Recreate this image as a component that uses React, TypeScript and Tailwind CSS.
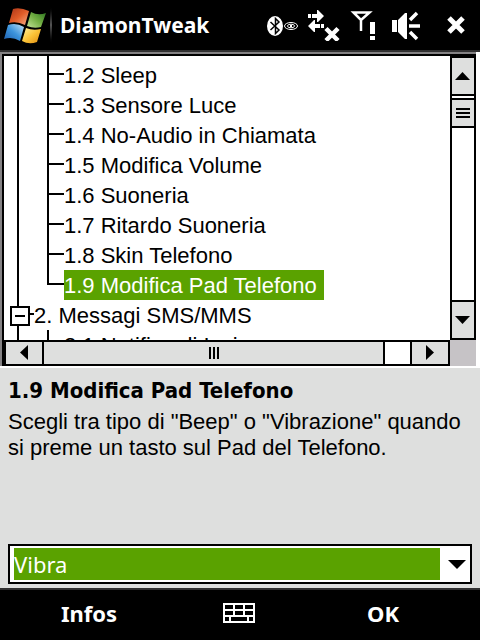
import React from 'react'
import { clsx } from 'clsx'

const items = [
  '1.2 Sleep',
  '1.3 Sensore Luce',
  '1.4 No-Audio in Chiamata',
  '1.5 Modifica Volume',
  '1.6 Suoneria',
  '1.7 Ritardo Suoneria',
  '1.8 Skin Telefono',
  '1.9 Modifica Pad Telefono',
]

function StartFlag() {
  return (
    <svg width="44" height="38" viewBox="0 -2 44 38" aria-hidden="true">
      <defs>
        <linearGradient id="red" x1="0" y1="0" x2="1" y2="1">
          <stop offset="0" stopColor="#a83418" />
          <stop offset="0.5" stopColor="#e05c28" />
          <stop offset="1" stopColor="#f8b088" />
        </linearGradient>
        <linearGradient id="green" x1="0" y1="1" x2="1" y2="0">
          <stop offset="0" stopColor="#c4e498" />
          <stop offset="0.5" stopColor="#74b044" />
          <stop offset="1" stopColor="#2c7420" />
        </linearGradient>
        <linearGradient id="blue" x1="0" y1="1" x2="1" y2="0">
          <stop offset="0" stopColor="#1c5cac" />
          <stop offset="0.5" stopColor="#3c94dc" />
          <stop offset="1" stopColor="#c4e4f8" />
        </linearGradient>
        <linearGradient id="yellow" x1="0" y1="0" x2="1" y2="1">
          <stop offset="0" stopColor="#fff0a0" />
          <stop offset="0.5" stopColor="#fcc438" />
          <stop offset="1" stopColor="#e08c10" />
        </linearGradient>
      </defs>
      <path d="M9 1Q16 -1 25 3L21 17Q13 13 5 15Z" fill="url(#red)" />
      <path d="M27 4Q34 8 42 5L37 19Q30 21 23 18Z" fill="url(#green)" />
      <path d="M4 17Q12 14 20 19L16 33Q8 28 0 31Z" fill="url(#blue)" />
      <path d="M22 20Q29 23 37 21L33 34Q25 37 18 33Z" fill="url(#yellow)" />
    </svg>
  )
}

function StatusIcons() {
  return (
    <svg width="156" height="32" viewBox="266 9 156 32" fill="#fff" aria-hidden="true">
      {/* bluetooth */}
      <ellipse cx="275" cy="26" rx="8" ry="10" />
      <path d="M270.500 22L279 30L275.500 33.500V18.500L279 22L270.500 30" fill="none" stroke="#000" strokeWidth="1.500" />
      <g fill="none" stroke="#fff" strokeWidth="1">
        <ellipse cx="291" cy="26" rx="6.500" ry="3.500" />
        <ellipse cx="291" cy="26" rx="3.500" ry="1.800" />
      </g>
      <path d="M290 25h2v2h-2z" />
      {/* data connection */}
      <path d="M308 14h3v4h-3zM312 14h5v-4h1l6 6l-6 6h-1v-4h-5z" />
      <path d="M308 26l6 -6h1v4h5v4h-5v4h-1zM321 24h3v4h-3z" />
      <path d="M326 28.500L338 40.500M338 28.500L326 40.500" fill="none" stroke="#fff" strokeWidth="4.500" />
      {/* signal */}
      <path d="M353.500 12.500H369.500L361 20ZM361 19V31" fill="none" stroke="#fff" strokeWidth="2.500" />
      <path d="M370 22h5v12h-5zM370 36h5v4h-5z" />
      {/* speaker */}
      <path d="M392 20h5v12h-5zM398 20l7 -7h2v26h-2l-7 -7z" />
      <path d="M410 20L417 13M409 26H420M410 32L417 39" fill="none" stroke="#fff" strokeWidth="3.500" />
    </svg>
  )
}

function TitleBar() {
  return (
    <header className="flex h-[50px] items-center bg-black text-white">
      <button aria-label="Start" className="ml-1 shrink-0">
        <StartFlag />
      </button>
      <span className="ml-[2px] h-10 w-[2px] bg-linear-to-b from-black via-[#555] to-black" />
      <h1 className="ml-2 flex-1 font-['Noto_Sans',sans-serif] text-[21px] leading-[30px] font-bold">DiamonTweak</h1>
      <StatusIcons />
      <button aria-label="Close" className="mr-[14px] ml-6 shrink-0">
        <svg width="20" height="20" viewBox="0 0 20 20">
          <path d="M3 3L17 17M17 3L3 17" stroke="#fff" strokeWidth="5" />
        </svg>
      </button>
    </header>
  )
}

function TreeItem({ label, selected = false, last = false }: { label: string; selected?: boolean; last?: boolean }) {
  return (
    <li className="flex h-[30px]">
      <span className={clsx('ml-[43px] w-[2px] bg-black', last ? 'h-[15px]' : 'h-[30px]')} />
      <span className="mt-[13px] h-[2px] w-[15px] bg-black" />
      <span className={clsx('leading-[32px] whitespace-nowrap', selected && 'min-w-[260px] bg-[#5aa200] text-white')}>
        {label}
      </span>
    </li>
  )
}

function Tree() {
  return (
    <div className="flex h-[284px] min-w-0 flex-1 overflow-hidden">
      <ul className="w-full bg-[linear-gradient(#000,#000)] bg-[length:2px_100%] bg-[position:13px_0] bg-no-repeat text-[22px]">
        <li className="flex h-1">
          <span className="ml-[43px] w-[2px] bg-black" />
        </li>
        {items.map((label, i) => (
          <TreeItem key={label} label={label} selected={i === 7} last={i === 7} />
        ))}
        <li className="flex h-[30px]">
          <button aria-label="Collapse" className="mt-[6px] ml-[6px] h-5 w-5 border-2 border-black bg-white px-[3px]">
            <span className="block h-[2px] w-[10px] bg-black" />
          </button>
          <span className="mt-[13px] h-[2px] w-1 bg-black" />
          <span className="leading-[32px] whitespace-nowrap">2. Messagi SMS/MMS</span>
        </li>
        <TreeItem label="2.1 Notifica di Invio" />
      </ul>
    </div>
  )
}

function Arrow({ d, label }: { d: string; label: string }) {
  return (
    <button aria-label={label} className="flex shrink-0 items-center justify-center bg-[#dedfde]">
      <svg width="16" height="16" viewBox="0 0 16 16">
        <path d={d} />
      </svg>
    </button>
  )
}

function VerticalScroll() {
  return (
    <div className="grid w-[26px] shrink-0 grid-rows-[36px_2px_26px_1fr_36px] gap-y-[2px] border-2 border-black bg-black">
      <Arrow label="Scroll up" d="M0 12L7.500 4L15 12Z" />
      <span className="bg-white" />
      <span className="flex flex-col items-center justify-center gap-[2px] bg-[#dedfde]">
        <i className="h-[2px] w-[14px] bg-black" />
        <i className="h-[2px] w-[14px] bg-black" />
        <i className="h-[2px] w-[14px] bg-black" />
      </span>
      <span className="bg-white" />
      <Arrow label="Scroll down" d="M0 4L7.500 12L15 4Z" />
    </div>
  )
}

function HorizontalScroll() {
  return (
    <div className="grid h-[26px] flex-1 grid-cols-[36px_1fr_25px_36px] gap-x-[2px] border-2 border-black bg-black">
      <Arrow label="Scroll left" d="M12 0L4 7.500L12 15Z" />
      <span className="flex items-center justify-center gap-[2px] bg-[#dedfde]">
        <i className="h-3 w-[2px] bg-black" />
        <i className="h-3 w-[2px] bg-black" />
        <i className="h-3 w-[2px] bg-black" />
      </span>
      <span className="bg-white" />
      <Arrow label="Scroll right" d="M4 0L12 7.500L4 15Z" />
    </div>
  )
}

function KeyboardIcon() {
  return (
    <svg width="32" height="20" viewBox="0 0 32 20" fill="none" stroke="#fff" strokeWidth="2" shapeRendering="crispEdges">
      <path d="M1 1H31V19H1ZM1 7H31M1 13H31" />
      <path d="M11 1V7M21 1V7M11 7V13M21 7V13M7 13V19M25 13V19" />
    </svg>
  )
}

export default function App() {
  return (
    <div className="flex min-h-screen flex-col bg-[#dedfde] font-['Liberation_Sans',sans-serif] text-black">
      <TitleBar />
      <main className="flex flex-1 flex-col">
        <div className="border-t-2 border-[#313031] bg-white pb-[2px]">
          <div className="mr-1 border-t-2 border-l-2 border-[#848284]">
            <div className="border-t-2 border-l-2 border-black">
              <div className="flex">
                <Tree />
                <VerticalScroll />
              </div>
              <div className="flex">
                <HorizontalScroll />
                <span className="w-[26px] bg-[#c6c3c6]" />
              </div>
            </div>
          </div>
        </div>
        <section className="flex flex-1 flex-col px-2 pt-2 pb-1">
          <label
            htmlFor="pad"
            className="font-['DejaVu_Sans_Condensed','DejaVu_Sans',sans-serif] text-[22px] leading-[30px] font-bold"
          >
            1.9 Modifica Pad Telefono
          </label>
          <p className="pt-[3px] text-[22px] leading-[26px]">
            Scegli tra tipo di "Beep" o "Vibrazione" quando si preme un tasto sul Pad del Telefono.
          </p>
          <div className="relative mt-auto h-10 border-2 border-black bg-white px-1 py-[2px]">
            <select
              id="pad"
              className="block h-8 w-[calc(100%-26px)] appearance-none bg-[#5aa200] font-['Noto_Sans',sans-serif] text-[22px] leading-[30px] text-white outline-none"
            >
              <option>Vibra</option>
              <option>Beep</option>
            </select>
            <svg className="pointer-events-none absolute top-[14px] right-1" width="18" height="9" viewBox="0 0 18 9">
              <path d="M0 0H18L9 9Z" />
            </svg>
          </div>
        </section>
      </main>
      <footer className="grid h-[52px] grid-cols-[178fr_122fr_166fr] items-center border-t-2 border-[#313031] bg-black pr-[14px] pb-1 font-['Noto_Sans',sans-serif] text-[22px] leading-[30px] font-bold text-white">
        <button>Infos</button>
        <button aria-label="Keyboard" className="flex justify-center">
          <KeyboardIcon />
        </button>
        <button>OK</button>
      </footer>
    </div>
  )
}
